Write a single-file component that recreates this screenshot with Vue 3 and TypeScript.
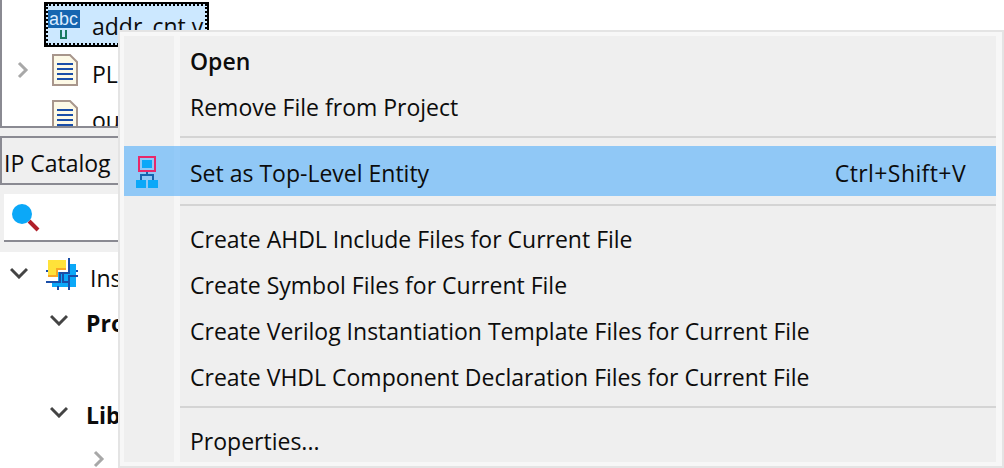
<template>
  <div class="page">
    <div class="project-panel">
      <div class="selected-row">
        <div class="selected-item">
          <svg class="file-icon" width="32" height="30" viewBox="0 0 32 30">
            <rect x="0" y="0" width="32" height="18" fill="#1565b0" />
            <text x="1" y="15" class="abc">abc</text>
            <path d="M13 20v9M18 20v9M13 28h5" stroke="#1a7a60" stroke-width="2" fill="none" />
          </svg>
          <span class="label">addr_cnt.v</span>
        </div>
      </div>
      <div class="tree-row">
        <svg class="chevron" width="14" height="18" viewBox="0 0 14 18">
          <path d="M3 2l7 7-7 7" stroke="#a8a8a8" stroke-width="3" fill="none" />
        </svg>
        <svg class="doc" width="26" height="32" viewBox="0 0 26 32">
          <path d="M1 1h17l7 7v23H1z" fill="#fdf9e6" stroke="#a8968c" stroke-width="2" />
          <path d="M5 10h16M5 15h16M5 20h16M5 25h16" stroke="#1a4ea8" stroke-width="2" />
        </svg>
        <span class="label">PLL.v</span>
      </div>
      <div class="tree-row no-chevron">
        <svg class="doc" width="26" height="32" viewBox="0 0 26 32">
          <path d="M1 1h17l7 7v23H1z" fill="#fdf9e6" stroke="#a8968c" stroke-width="2" />
          <path d="M5 10h16M5 15h16M5 20h16M5 25h16" stroke="#1a4ea8" stroke-width="2" />
        </svg>
        <span class="label">output.v</span>
      </div>
    </div>

    <div class="catalog-area">
      <div class="catalog-tab">IP Catalog</div>
      <div class="search-box">
        <svg width="28" height="28" viewBox="0 0 28 28">
          <path d="M17 17l9 9" stroke="#b0202a" stroke-width="4" />
          <circle cx="10" cy="10" r="10" fill="#0ba8f8" />
        </svg>
      </div>
    </div>

    <div class="catalog-tree">
      <div class="cat-row installed">
        <svg class="chevron" width="18" height="12" viewBox="0 0 18 12">
          <path d="M1 2l8 8 8-8" stroke="#444" stroke-width="3" fill="none" />
        </svg>
        <svg class="ip-icon" width="32" height="32" viewBox="0 0 32 32">
          <path d="M24 6h6v23H6v-6h6V14h10z" fill="#0ba8f8" />
          <path d="M2 2h18v8h-8v7H2z" fill="#ffe23a" />
          <path d="M2 17h8v-7h10v2h-8v7H2z" fill="#f9a825" />
          <path d="M23 0v15h-9v9H0M17 15v9h6v8M23 24v-6h9M30 13h2M0 13h2M12 28v4" stroke="#1a4ea8" stroke-width="2" fill="none" />
        </svg>
        <span class="label">Installed IP</span>
      </div>
      <div class="cat-row sub">
        <svg class="chevron" width="18" height="12" viewBox="0 0 18 12">
          <path d="M1 2l8 8 8-8" stroke="#444" stroke-width="3" fill="none" />
        </svg>
        <span class="label bold">Project</span>
      </div>
      <div class="cat-row sub library">
        <svg class="chevron" width="18" height="12" viewBox="0 0 18 12">
          <path d="M1 2l8 8 8-8" stroke="#444" stroke-width="3" fill="none" />
        </svg>
        <span class="label bold">Library</span>
      </div>
      <div class="cat-row leaf">
        <svg class="chevron" width="12" height="18" viewBox="0 0 12 18">
          <path d="M2 2l7 7-7 7" stroke="#a8a8a8" stroke-width="3" fill="none" />
        </svg>
      </div>
    </div>

    <div class="menu">
      <div class="menu-inner">
        <template v-for="(entry, i) in entries" :key="i">
          <div v-if="entry.separator" class="separator" :class="entry.cls"></div>
          <div v-else class="item" :class="{ active: entry.active, strong: entry.strong }">
            <span class="gutter">
              <svg v-if="entry.active" class="entity-icon" width="22" height="32" viewBox="0 0 22 32">
                <rect x="3" y="1" width="16" height="14" fill="none" stroke="#e8286a" stroke-width="2" />
                <rect x="6" y="4" width="10" height="8" fill="#0ba8f8" />
                <path d="M11 16v3M5 24v-5h12v5" stroke="#1565b0" stroke-width="2" fill="none" />
                <rect x="0" y="24" width="10" height="8" fill="#0ba8f8" />
                <rect x="12" y="24" width="10" height="8" fill="#0ba8f8" />
              </svg>
            </span>
            <span class="strip"></span>
            <span class="item-text">{{ entry.text }}</span>
            <span v-if="entry.shortcut" class="shortcut">{{ entry.shortcut }}</span>
          </div>
        </template>
      </div>
    </div>
  </div>
</template>

<script setup lang="ts">
interface Entry {
  text?: string
  shortcut?: string
  active?: boolean
  strong?: boolean
  separator?: boolean
  cls?: string
}

const entries: Entry[] = [
  { text: 'Open', strong: true },
  { text: 'Remove File from Project' },
  { separator: true, cls: 'sep-a' },
  { text: 'Set as Top-Level Entity', shortcut: 'Ctrl+Shift+V', active: true },
  { separator: true, cls: 'sep-b' },
  { text: 'Create AHDL Include Files for Current File' },
  { text: 'Create Symbol Files for Current File' },
  { text: 'Create Verilog Instantiation Template Files for Current File' },
  { text: 'Create VHDL Component Declaration Files for Current File' },
  { separator: true, cls: 'sep-c' },
  { text: 'Properties...' },
]
</script>

<style>
html,
body {
  margin: 0;
  background: #fff;
  overflow: hidden;
}
</style>

<style scoped>
.page {
  position: relative;
  width: 1004px;
  height: 468px;
  overflow: hidden;
  background: #fff;
  font-family: "Open Sans", "Noto Sans", sans-serif;
  font-size: 23px;
  color: #0c0c0c;
}

.project-panel {
  height: 126px;
  overflow: hidden;
  border-left: 2px solid #8a8a92;
  border-bottom: 2px solid #8a8a92;
}

.selected-row {
  height: 47px;
  padding: 2px 0 0 42px;
  box-sizing: border-box;
}

.selected-item {
  display: flex;
  width: 165px;
  height: 45px;
  box-sizing: border-box;
  border: 2px solid #000;
  outline: 2px dotted #000;
  outline-offset: -4px;
  background: #cce8ff;
  padding: 6px 0 0 2px;
  white-space: nowrap;
}

.file-icon {
  flex: none;
  margin-right: 12px;
}

.abc {
  font-family: "Liberation Sans", sans-serif;
  font-size: 18px;
  fill: #dcecff;
}

.selected-item .label {
  margin-top: 0;
}

.tree-row {
  display: flex;
  align-items: center;
  height: 46px;
  padding-left: 14px;
  white-space: nowrap;
}

.tree-row .chevron {
  margin-right: 22px;
}

.no-chevron {
  padding-left: 50px;
}

.doc {
  flex: none;
  margin-right: 14px;
}

.tree-row .label {
  margin-top: 8px;
}

.catalog-area {
  height: 124px;
  box-sizing: border-box;
  padding-top: 8px;
  background: #f0f0f0;
}

.catalog-tab {
  box-sizing: border-box;
  height: 49px;
  line-height: 50px;
  padding-left: 2px;
  border-top: 2px solid #8a8a92;
  border-bottom: 2px solid #8a8a92;
  border-left: 2px solid #8a8a92;
  background: #efefef;
}

.search-box {
  height: 48px;
  display: flex;
  align-items: center;
  padding: 2px 0 0 8px;
  margin: 9px 0 0 4px;
  background: #fff;
  border-bottom: 2px solid #8a8a92;
  box-sizing: border-box;
}

.catalog-tree {
  padding-top: 2px;
}

.cat-row {
  display: flex;
  align-items: center;
  height: 46px;
  white-space: nowrap;
}

.installed {
  padding-left: 10px;
}

.installed .label {
  margin-top: 2px;
}

.installed .chevron {
  margin: -8px 18px 0 0;
}

.ip-icon {
  flex: none;
  margin: -6px 12px 0 0;
}

.sub {
  padding-left: 50px;
}

.sub .chevron {
  margin: -7px 18px 0 0;
}

.library {
  margin-top: 46px;
}

.leaf {
  padding-left: 93px;
}

.leaf .chevron {
  margin-top: -4px;
}

.bold {
  font-weight: 700;
}

.menu {
  position: absolute;
  left: 118px;
  top: 30px;
  width: 886px;
  height: 438px;
  box-sizing: border-box;
  border: 2px solid #e4e4e4;
  background: #f7f7f7;
  padding: 4px 6px 4px 4px;
  overflow: hidden;
}

.menu-inner {
  height: 100%;
  overflow: hidden;
  background: linear-gradient(to right, #efefef 50px, #f6f6f6 50px, #f6f6f6 56px, #efefef 56px);
  padding-top: 2px;
  box-sizing: border-box;
}

.item {
  display: flex;
  align-items: center;
  height: 46px;
  white-space: nowrap;
}

.gutter {
  flex: none;
  width: 50px;
  box-sizing: border-box;
  padding-left: 12px;
  display: flex;
  align-items: center;
  height: 100%;
}

.entity-icon {
  margin-top: 2px;
}

.strip {
  flex: none;
  width: 6px;
  height: 100%;
}

.item-text {
  padding-left: 10px;
  flex: 1;
}

.strong .item-text {
  font-weight: 600;
}

.shortcut {
  padding-right: 30px;
  letter-spacing: 0.4px;
}

.active {
  height: 50px;
  background: #90c8f6;
}

.active .strip {
  background: #94caf8;
}

.active .item-text,
.active .shortcut {
  padding-top: 3px;
}

.separator {
  height: 2px;
  margin-left: 56px;
  background: #d4d4d4;
}

.sep-a {
  margin-top: 6px;
  margin-bottom: 8px;
}

.sep-b {
  margin-top: 8px;
  margin-bottom: 10px;
}

.sep-c {
  margin-top: 6px;
  margin-bottom: 10px;
}
</style>
